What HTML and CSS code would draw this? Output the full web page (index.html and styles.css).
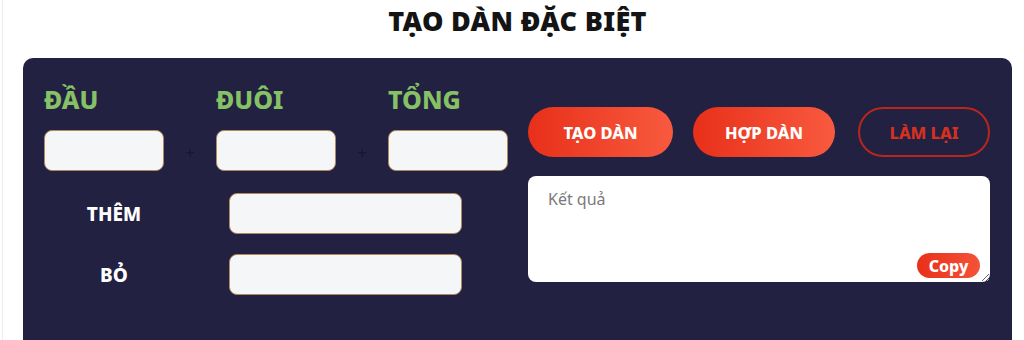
FILE: index.html
```html
<!DOCTYPE html>
<html lang="vi">
<head>
<meta charset="utf-8">
<title>Tạo dàn đặc biệt</title>
<link rel="stylesheet" href="styles.css">
</head>
<body>
<div class="page">
  <div class="wrap">
    <h1 class="title">TẠO DÀN ĐẶC BIỆT</h1>
    <div class="panel">
      <div class="left">
        <div class="triple">
          <div class="lbl">ĐẦU</div>
          <div></div>
          <div class="lbl">ĐUÔI</div>
          <div></div>
          <div class="lbl">TỔNG</div>
          <input class="field" type="text">
          <span class="plus">+</span>
          <input class="field" type="text">
          <span class="plus">+</span>
          <input class="field" type="text">
        </div>
        <div class="rows">
          <div class="row-lbl">THÊM</div>
          <input class="field wide" type="text">
          <div class="row-lbl">BỎ</div>
          <input class="field wide" type="text">
        </div>
      </div>
      <div class="right">
        <div class="btns">
          <button class="btn fill btn-tao">TẠO DÀN</button>
          <button class="btn fill btn-hop">HỢP DÀN</button>
          <button class="btn outline">LÀM LẠI</button>
        </div>
        <div class="result">
          <textarea class="out" placeholder="Kết quả"></textarea>
          <button class="copy">Copy</button>
        </div>
      </div>
    </div>
  </div>
</div>
</body>
</html>
```
FILE: styles.css
```css
* { box-sizing: border-box; }
html, body { margin: 0; padding: 0; background: #fff; }
body {
  font-family: "Noto Sans", "Open Sans", sans-serif;
  height: 340px;
  overflow: hidden;
}
.page {
  margin-left: 2px;
  border-left: 1px solid #ececec;
  padding-left: 20px;
  height: 340px;
}
.wrap { width: 989px; }
.title {
  margin: 0;
  padding-top: 3px;
  height: 58px;
  text-align: center;
  font-size: 27px;
  line-height: 36px;
  font-weight: 900;
  letter-spacing: 0.3px;
  color: #141414;
}
.panel {
  background: #222141;
  border-radius: 10px 10px 0 0;
  padding: 27px 23px 0 21px;
  display: flex;
  gap: 20px;
  height: 282px;
}
.left { width: 464px; }
.triple {
  display: grid;
  grid-template-columns: 120px 52px 120px 52px 120px;
  align-items: center;
}
.lbl {
  color: #86c165;
  font-size: 25px;
  font-weight: 800;
  line-height: 28px;
  margin-bottom: 17px;
}
.field {
  display: block;
  width: 100%;
  height: 41px;
  border: 1px solid #b08a5a;
  border-radius: 8px;
  background: #f5f6f8;
  outline: none;
}
.plus {
  text-align: center;
  color: #17162d;
  font-size: 16px;
  padding-top: 4px;
}
.rows {
  margin-top: 22px;
  display: grid;
  grid-template-columns: 140px 233px;
  column-gap: 45px;
  row-gap: 20px;
  align-items: center;
}
.row-lbl {
  text-align: center;
  color: #fff;
  font-size: 19px;
  font-weight: 800;
}
.right { width: 462px; padding-top: 22px; }
.btns {
  display: flex;
  justify-content: space-between;
}
.btn {
  height: 50px;
  border-radius: 25px;
  font-family: "Noto Sans", sans-serif;
  font-size: 16.5px;
  font-weight: 800;
  cursor: pointer;
  padding: 0;
}
.fill {
  border: none;
  color: #fff;
  background: linear-gradient(90deg, #e8301a 0%, #f85a3f 100%);
}
.btn-tao { width: 145px; margin-right: 20px; }
.btn-hop { width: 142px; margin-right: 23px; }
.outline {
  width: 132px;
  background: transparent;
  border: 2px solid #b8261c;
  color: #d63020;
}
.result {
  position: relative;
  margin-top: 19px;
}
.out {
  display: block;
  width: 100%;
  height: 106px;
  border: none;
  border-radius: 8px;
  background: #fff;
  padding: 12px 20px;
  font-family: "Noto Sans", sans-serif;
  font-size: 16px;
  resize: both;
  outline: none;
}
.out::placeholder { color: #7a7a7a; }
.copy {
  position: absolute;
  right: 10px;
  bottom: 4px;
  width: 63px;
  height: 25px;
  border: none;
  border-radius: 13px;
  background: linear-gradient(90deg, #e8301a 0%, #f55238 100%);
  color: #fff;
  font-family: "Noto Sans", sans-serif;
  font-size: 16px;
  font-weight: 800;
  padding: 0;
}
```
